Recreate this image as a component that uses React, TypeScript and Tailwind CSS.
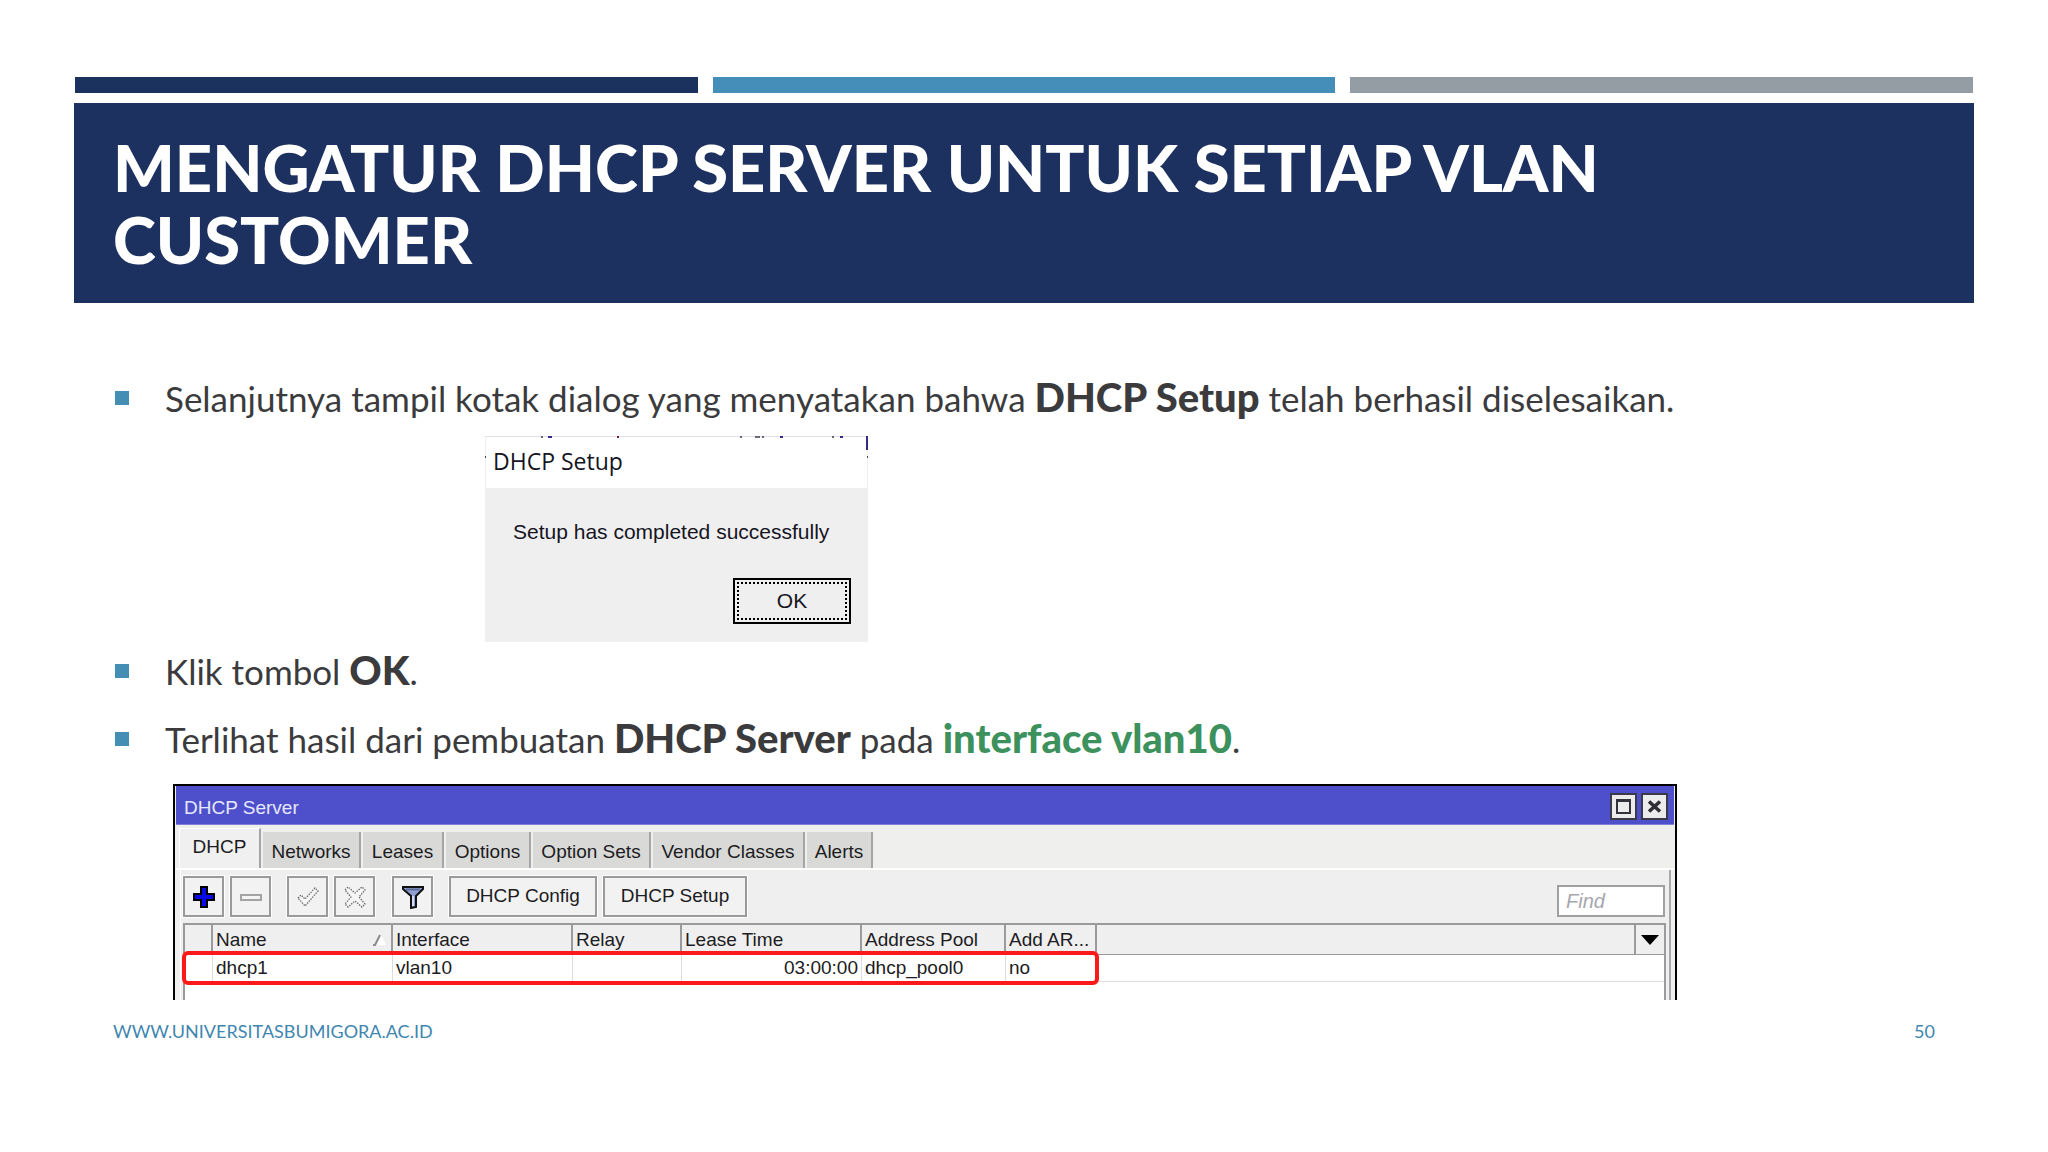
import React from "react";

function Bullet({ children }: { children: React.ReactNode }) {
  return (
    <div className="flex text-[35px] leading-[42px] text-[#3b3b3d]">
      <span className="mt-3.5 mr-9 ml-[41px] size-3.5 shrink-0 bg-[#448eb5]" />
      <p>{children}</p>
    </div>
  );
}

function Strong({ children }: { children: React.ReactNode }) {
  return <strong className="text-[40px] leading-none font-black">{children}</strong>;
}

function ToolButton({ label, className = "", children }: { label?: string; className?: string; children: React.ReactNode }) {
  return (
    <button
      type="button"
      aria-label={label}
      className={`flex h-[41px] items-center justify-center border-2 border-[#9a9a9c] bg-[#f2f2f2] outline-1 outline-white ${className}`}
    >
      {children}
    </button>
  );
}

const tabs = [
  { name: "Networks", width: "w-[98px]" },
  { name: "Leases", width: "w-[81px]" },
  { name: "Options", width: "w-[85px]" },
  { name: "Option Sets", width: "w-[118px]" },
  { name: "Vendor Classes", width: "w-[152px]" },
  { name: "Alerts", width: "w-[66px]" },
];

const head = "border-r-2 border-b border-[#9a9a9c] px-[3px] text-left font-normal";
const cell = "border-r border-[#dcdcde] px-[3px]";

function SetupDialog() {
  return (
    <section aria-label="DHCP Setup" className="relative mt-[17px] ml-[411px] w-[383px] border-t border-[#dedee4] bg-[#f0eff0] text-[#15151f]">
      <svg aria-hidden="true" className="absolute -top-px left-0 h-[54px] w-full" shapeRendering="crispEdges">
        <path d="M56 0h2v2h-2zM255 0h2v2h-2zM270 0h5v2h-5zM277 0h2v2h-2zM347 0h2v2h-2z" fill="#6b6b78" />
        <path d="M63 0h4v2h-4zM295 0h3v2h-3zM355 0h3v2h-3zM381 0h2v14h-2z" fill="#332b85" />
        <path d="M132 0h2v2h-2z" fill="#7a1f2c" />
        <path d="M0 20h1v2h-1zM382 20h1v2h-1z" fill="#444" />
      </svg>
      <h2 className="mx-px h-[51px] bg-white pl-[7px] font-['Open_Sans'] text-[23px] leading-[48px]">DHCP Setup</h2>
      <p className="px-7 pt-8 text-[21px] leading-6">Setup has completed successfully</p>
      <div className="flex justify-end pt-[34px] pr-[17px] pb-[18px]">
        <button type="button" className="h-[46px] w-[118px] border-2 border-black bg-[#f0eff0] p-0.5 text-[21px]">
          <span className="flex h-full items-center justify-center border-2 border-dotted border-black">OK</span>
        </button>
      </div>
    </section>
  );
}

function ServerWindow() {
  return (
    <section aria-label="DHCP Server" className="mt-6 ml-[99px] w-full max-w-[1504px] border-2 border-b-0 border-black bg-[#efeff0] px-px text-[19px] text-[#1c1c22]">
      <header className="flex h-[39px] items-center border-b border-[#7f80d6] bg-[#4e50cb] pt-0.5 pr-1.5 pl-2 text-[#e6e8fb]">
        <h2 className="grow pt-1">DHCP Server</h2>
        <button type="button" aria-label="Maximize" className="mr-1 flex size-[27px] items-center justify-center border-2 border-[#3a3a48] bg-[#ececec]">
          <svg className="size-[17px]" viewBox="0 0 17 17" shapeRendering="crispEdges"><path d="M1 2.5h15M2 1v15M15 1v15M1 15h15" stroke="#33333b" strokeWidth="2" fill="none" /><path d="M1 1h15v3H1z" fill="#33333b" /></svg>
        </button>
        <button type="button" aria-label="Close" className="flex size-[27px] items-center justify-center border-2 border-[#3a3a48] bg-[#ececec]">
          <svg className="size-[15px]" viewBox="0 0 15 15"><path d="M2 2.5l11 10M13 2.5l-11 10" stroke="#2e2e34" strokeWidth="3.6" /></svg>
        </button>
      </header>
      <div role="tablist" className="flex h-[45px] items-end gap-0.5 border-b-2 border-white bg-[#efefed] pl-[3px]">
        <button type="button" role="tab" aria-selected="true" className="h-10 w-[82px] border-t border-r-2 border-l border-t-white border-r-[#a5a5a5] border-l-white bg-[#f0f0f0] pb-0.5">DHCP</button>
        {tabs.map((t) => (
          <button key={t.name} type="button" role="tab" aria-selected="false" className={`h-9 border-r-2 border-[#a5a5a5] bg-[#d9d9d7] pt-1 whitespace-nowrap ${t.width}`}>
            {t.name}
          </button>
        ))}
      </div>
      <div className="mr-[3px] ml-1 border-r-2 border-l border-r-[#a9a9ab] border-l-white pr-[3px] pl-0.5">
        <div className="flex items-end gap-1.5 pt-1.5 pb-1.5">
          <ToolButton label="Add" className="w-[41px]">
            <svg className="size-6" viewBox="0 0 24 24" shapeRendering="crispEdges"><path d="M9 2h6v7h7v6h-7v7H9v-7H2V9h7z" fill="#0a0ae8" stroke="#000" strokeWidth="2" /></svg>
          </ToolButton>
          <ToolButton label="Remove" className="w-[41px]">
            <svg className="size-6" viewBox="0 0 24 24" shapeRendering="crispEdges"><path d="M2 10h20v5H2z" fill="#f4f4f4" stroke="#a3a3a5" strokeWidth="2" /></svg>
          </ToolButton>
          <ToolButton label="Enable" className="ml-2.5 w-[41px]">
            <svg className="size-6" viewBox="0 0 24 24"><path d="M2 13l3-3 4 4L19 3l3 3L9 21z" fill="#f6f6f6" stroke="#666" strokeWidth="1.3" strokeDasharray="1.4 1.2" /></svg>
          </ToolButton>
          <ToolButton label="Disable" className="w-[41px]">
            <svg className="size-6" viewBox="0 0 24 24"><path d="M2 5l3-3 7 6 7-6 3 3-6 7 6 7-3 3-7-6-7 6-3-3 6-7z" fill="#f6f6f6" stroke="#666" strokeWidth="1.3" strokeDasharray="1.4 1.2" /></svg>
          </ToolButton>
          <ToolButton label="Filter" className="ml-[11px] w-[41px]">
            <svg className="size-6" viewBox="0 0 24 24"><path d="M2 2h20v2l-7 7v11l-5 1V11L2 4z" fill="#8f9fd2" stroke="#111" strokeWidth="2" /><path d="M12 11v10" stroke="#d3dbf5" strokeWidth="2" /><path d="M5 4.5h14" stroke="#5f6d9c" strokeWidth="2" /></svg>
          </ToolButton>
          <ToolButton className="ml-2.5 w-[148px]">DHCP Config</ToolButton>
          <ToolButton className="w-36">DHCP Setup</ToolButton>
          <input aria-label="Find" placeholder="Find" className="mr-px ml-auto h-8 w-[108px] border-2 border-[#a0a0a2] bg-white px-[7px] text-[20px] italic placeholder:text-[#a6a6ae]" />
        </div>
        <div className="relative border-2 border-b-0 border-[#9a9a9c] bg-white pb-[18px]">
          <table className="w-full table-fixed border-separate border-spacing-0 leading-6">
            <colgroup>
              <col className="w-7" />
              <col className="w-[180px]" />
              <col className="w-[180px]" />
              <col className="w-[109px]" />
              <col className="w-[180px]" />
              <col className="w-36" />
              <col className="w-[91px]" />
              <col />
              <col className="w-[28px]" />
            </colgroup>
            <thead className="bg-[#f0eff0]">
              <tr className="h-[30px]">
                <th className={head} />
                <th className={head}>
                  <span className="flex items-center justify-between">
                    Name
                    <svg className="h-3 w-4" viewBox="0 0 16 12"><path d="M9 1l5 10H5z" fill="#fff" /><path d="M1 11h2L8 1" stroke="#8b8b8d" strokeWidth="2" fill="none" /></svg>
                  </span>
                </th>
                <th className={head}>Interface</th>
                <th className={head}>Relay</th>
                <th className={head}>Lease Time</th>
                <th className={head}>Address Pool</th>
                <th className={`${head} whitespace-nowrap`}>Add AR...</th>
                <th className={head} />
                <th className="border-b border-[#9a9a9c] p-0">
                  <button type="button" aria-label="Columns" className="flex w-full justify-center">
                    <svg className="h-2.5 w-[18px]" viewBox="0 0 18 10"><path d="M0 0h18L9 10z" fill="#000" /></svg>
                  </button>
                </th>
              </tr>
            </thead>
            <tbody>
              <tr className="h-[27px] *:border-b *:border-b-[#dcdcde] *:py-0">
                <td className={cell} />
                <td className={cell}>dhcp1</td>
                <td className={cell}>vlan10</td>
                <td className={cell} />
                <td className={`${cell} text-right`}>03:00:00</td>
                <td className={cell}>dhcp_pool0</td>
                <td className="px-[3px]">no</td>
                <td colSpan={2} />
              </tr>
            </tbody>
          </table>
          <div className="pointer-events-none absolute top-[26px] -left-[3px] h-[34px] w-[917px] rounded-md border-4 border-[#fb1a1a]" />
        </div>
      </div>
    </section>
  );
}

export default function App() {
  return (
    <main className="min-h-screen bg-white px-[74px] pt-[77px] font-['Liberation_Sans',sans-serif]">
      <div className="grid grid-cols-3 gap-[15px] px-px">
        <div className="h-4 bg-[#1b325f]" />
        <div className="h-4 bg-[#448eb9]" />
        <div className="h-4 bg-[#949da3]" />
      </div>
      <h1 className="mt-2.5 bg-[#1c3160] px-[39px] pt-7 pb-7 font-['Lato',sans-serif] text-[65px] leading-[72px] font-black text-white">
        MENGATUR DHCP SERVER UNTUK SETIAP VLAN
        <br />
        CUSTOMER
      </h1>
      <div className="pt-[74px] font-['Lato',sans-serif]">
        <Bullet>
          Selanjutnya tampil kotak dialog yang menyatakan bahwa <Strong>DHCP Setup</Strong> telah berhasil diselesaikan.
        </Bullet>
      </div>
      <SetupDialog />
      <div className="flex flex-col gap-[26px] pt-2 font-['Lato',sans-serif]">
        <Bullet>
          Klik tombol <Strong>OK</Strong>.
        </Bullet>
        <Bullet>
          Terlihat hasil dari pembuatan <Strong>DHCP Server</Strong> pada{" "}
          <span className="text-[#3c915c]"><Strong>interface vlan10</Strong></span>.
        </Bullet>
      </div>
      <ServerWindow />
      <footer className="flex justify-between px-[39px] pt-[19px] font-['Lato',sans-serif] text-[18px] leading-6 text-[#3f86b0]">
        <a href="http://www.universitasbumigora.ac.id">WWW.UNIVERSITASBUMIGORA.AC.ID</a>
        <span>50</span>
      </footer>
    </main>
  );
}
